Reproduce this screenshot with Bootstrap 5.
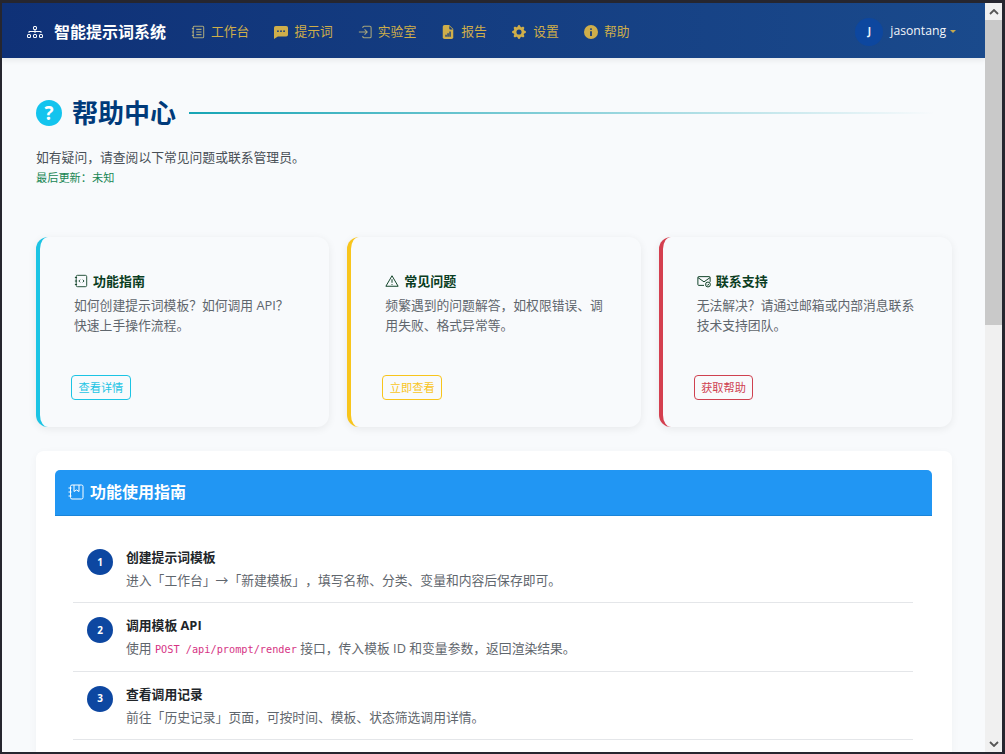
<!DOCTYPE html>
<html lang="zh-CN">
<head>
<meta charset="utf-8">
<title>帮助中心</title>
<link href="https://cdn.jsdelivr.net/npm/bootstrap@5.3.0/dist/css/bootstrap.min.css" rel="stylesheet">
<style>
html,body{height:100%;overflow:hidden}
body{background:#26262f;padding:3px 3px 2px 2px;font-family:"Open Sans","Noto Sans CJK SC",sans-serif;font-size:12.8px;color:#212529;text-spacing-trim:space-all}
.frame{height:100%}
.main-pane{min-width:0;background:#f8fafc;overflow:hidden}
.top-bar{height:55px;background:linear-gradient(90deg,#0f3177,#1a4a8c);padding:2px 29px 0 25px;box-shadow:0 2px 6px rgba(0,0,0,.08)}
.brand-link{color:#fff;font-size:16px;font-weight:700;gap:11px;margin-right:25px;text-decoration:none;line-height:1}
.nav-entry{color:#cfae4a;font-size:12.8px;text-decoration:none;gap:6px;margin-right:25px;line-height:1}
.nav-entry svg{width:14px;height:14px;flex:none}
.nav-entry-wide{gap:7.5px}
.ava{width:28px;height:28px;background:#0d47a1;color:#fff;font-size:10px;font-weight:700}
.user-link{color:#fff;font-size:12.2px;gap:7px;text-decoration:none;opacity:.95}
.user-caret{width:0;height:0;border-left:3.5px solid transparent;border-right:3.5px solid transparent;border-top:3.5px solid #cfae4a;margin-left:-3px}
.page-body{padding:42px 33px 0 34px}
.title-row{gap:10px;height:26px}
.q-icon{width:26px;height:26px;background:#13c4ee;color:#fff;font-weight:700;font-size:19px;line-height:1;flex:none}
.page-title{font-size:26px;font-weight:700;color:#003a7a;margin:0;line-height:27px;white-space:nowrap}
.title-line{height:2px;flex:1;margin:0 17px 0 3px;background:linear-gradient(90deg,#17a5b5,rgba(23,165,181,0))}
.intro{color:#495057;margin:22px 0 0;line-height:18px}
.updated{color:#198754;font-size:11.2px;line-height:16px;margin-top:4px}
.tips-row{--bs-gutter-x:18px;margin-top:51px}
.tip-box{height:190px;background:#f8fafc;border-radius:12px;border-left:4px solid;box-shadow:0 2px 8px rgba(0,0,0,.07);padding:34px 34px 27px 34px}
.tip-cyan{border-color:#1cc4e4}
.tip-gold{border-color:#f8c51c}
.tip-red{border-color:#d43f4f}
.tip-head{font-size:13px;font-weight:700;color:#0a3d22;gap:5px;line-height:20px}
.tip-head svg{width:14px;height:14px;flex:none}
.tip-text{color:#5f666d;line-height:20px;margin:4px 0 0}
.tip-btn{--bs-btn-padding-x:6.5px;--bs-btn-padding-y:0;--bs-btn-font-size:11.2px;--bs-btn-border-radius:4px;--bs-btn-line-height:23px;margin-left:-3px}
.btn-cyan{--bs-btn-color:#1cc4e4;--bs-btn-border-color:#1cc4e4}
.btn-gold{--bs-btn-color:#f8c51c;--bs-btn-border-color:#f8c51c}
.btn-red{--bs-btn-color:#cf4150;--bs-btn-border-color:#cf4150}
.guide-box{background:#fff;border-radius:8px;margin-top:24px;padding:19px 20px 0 19px;box-shadow:0 2px 8px rgba(0,0,0,.04)}
.guide-head{height:46px;background:#2196f3;color:#fff;font-size:16px;font-weight:700;border-radius:5px 5px 0 0;padding:0 14px 2px 13px;gap:6px;border-bottom:1px solid #1a84d8}
.guide-head svg{width:16px;height:16px}
.guide-list{padding:18px 19px 60px 18px}
.guide-item{gap:13px;padding:12px 14px;border-bottom:1px solid #e4e6e9;height:68.5px}
.guide-item:first-child{padding-top:13px;height:69px}
.num{width:26px;height:26px;background:#0d47a1;color:#fff;font-size:10px;font-weight:700;flex:none;margin-top:2px}
.item-title{font-weight:700;color:#212529;line-height:20px}
.item-text{color:#5f666d;line-height:20px;margin-top:3px}
.item-text code{font-family:"DejaVu Sans Mono",monospace;font-size:10.25px;color:#d63384}
.sb{width:17px;background:#f0f0f0;flex:none}
.sb-btn{height:17px;color:#555}
.sb-thumb{height:305px;background:#c9c9c9}
</style>
</head>
<body>
<div class="frame d-flex">
  <div class="main-pane flex-grow-1">
    <nav class="top-bar d-flex align-items-center">
      <a class="brand-link d-flex align-items-center" href="#">
        <svg width="16" height="16" viewBox="0 0 16 16" fill="#fff"><path fill-rule="evenodd" d="M6 3.5A1.5 1.5 0 0 1 7.5 2h1A1.5 1.5 0 0 1 10 3.5v1A1.5 1.5 0 0 1 8.5 6v1H14a.5.5 0 0 1 .5.5v1a.5.5 0 0 1-1 0V8h-5v.5a.5.5 0 0 1-1 0V8h-5v.5a.5.5 0 0 1-1 0v-1A.5.5 0 0 1 2 7h5.5V6A1.5 1.5 0 0 1 6 4.5v-1zM8.5 5a.5.5 0 0 0 .5-.5v-1a.5.5 0 0 0-.5-.5h-1a.5.5 0 0 0-.5.5v1a.5.5 0 0 0 .5.5h1zM0 11.5A1.5 1.5 0 0 1 1.5 10h1A1.5 1.5 0 0 1 4 11.5v1A1.5 1.5 0 0 1 2.5 14h-1A1.5 1.5 0 0 1 0 12.5v-1zm1.5-.5a.5.5 0 0 0-.5.5v1a.5.5 0 0 0 .5.5h1a.5.5 0 0 0 .5-.5v-1a.5.5 0 0 0-.5-.5h-1zm4.5.5A1.5 1.5 0 0 1 7.5 10h1a1.5 1.5 0 0 1 1.5 1.5v1A1.5 1.5 0 0 1 8.5 14h-1A1.5 1.5 0 0 1 6 12.5v-1zm1.5-.5a.5.5 0 0 0-.5.5v1a.5.5 0 0 0 .5.5h1a.5.5 0 0 0 .5-.5v-1a.5.5 0 0 0-.5-.5h-1zm4.5.5a1.5 1.5 0 0 1 1.5-1.5h1a1.5 1.5 0 0 1 1.5 1.5v1a1.5 1.5 0 0 1-1.5 1.5h-1a1.5 1.5 0 0 1-1.5-1.5v-1zm1.5-.5a.5.5 0 0 0-.5.5v1a.5.5 0 0 0 .5.5h1a.5.5 0 0 0 .5-.5v-1a.5.5 0 0 0-.5-.5h-1z"/></svg>
        智能提示词系统
      </a>
      <a class="nav-entry d-flex align-items-center" href="#">
        <svg viewBox="0 0 16 16" fill="none" stroke="#a8a67c" stroke-width="1.2"><rect x="2.500" y="1.500" width="12" height="13" rx="1.200"/><path d="M1 4h2.500M1 8h2.500M1 12h2.500M6 5h6M6 8h6M6 11h6"/></svg>
        工作台
      </a>
      <a class="nav-entry d-flex align-items-center" href="#">
        <svg viewBox="0 0 16 16"><path fill="#cfae4a" d="M2 1h12a2 2 0 0 1 2 2v8a2 2 0 0 1-2 2H4.400L0 16V3a2 2 0 0 1 2-2z"/><circle cx="4.500" cy="7" r="1" fill="#123a7e"/><circle cx="8" cy="7" r="1" fill="#123a7e"/><circle cx="11.500" cy="7" r="1" fill="#123a7e"/></svg>
        提示词
      </a>
      <a class="nav-entry d-flex align-items-center" href="#">
        <svg viewBox="0 0 16 16" fill="none" stroke="#a8a67c" stroke-width="1.200"><path d="M5.500 3.500V3a1.500 1.500 0 0 1 1.500-1.500h6.500A1.500 1.500 0 0 1 15 3v10a1.500 1.500 0 0 1-1.500 1.500H7A1.500 1.500 0 0 1 5.500 13v-.5M1 8h9.500M7.500 5l3 3-3 3"/></svg>
        实验室
      </a>
      <a class="nav-entry d-flex align-items-center" href="#">
        <svg viewBox="0 0 16 16"><path fill="#cfae4a" d="M4 0h5.300L14 4.700V14a2 2 0 0 1-2 2H4a2 2 0 0 1-2-2V2a2 2 0 0 1 2-2z"/><path fill="#123a7e" d="M5 11h1.500v2.500H5zM7.300 9.500h1.500v4H7.300zM9.600 7.500h1.500v6H9.600zM9.500 1v3a1 1 0 0 0 1 1h3z"/></svg>
        报告
      </a>
      <a class="nav-entry nav-entry-wide d-flex align-items-center" href="#">
        <svg viewBox="0 0 16 16"><path fill="#cfae4a" d="M9.405 1.050c-.413-1.400-2.397-1.400-2.810 0l-.1.340a1.464 1.464 0 0 1-2.105.872l-.31-.170c-1.283-.698-2.686.705-1.987 1.987l.169.311c.446.820.023 1.841-.872 2.105l-.340.100c-1.400.413-1.400 2.397 0 2.810l.340.100a1.464 1.464 0 0 1 .872 2.105l-.170.310c-.698 1.283.705 2.686 1.987 1.987l.311-.169a1.464 1.464 0 0 1 2.105.872l.100.340c.413 1.400 2.397 1.400 2.810 0l.100-.340a1.464 1.464 0 0 1 2.105-.872l.310.170c1.283.698 2.686-.705 1.987-1.987l-.169-.311a1.464 1.464 0 0 1 .872-2.105l.340-.100c1.400-.413 1.400-2.397 0-2.810l-.340-.100a1.464 1.464 0 0 1-.872-2.105l.170-.310c.698-1.283-.705-2.686-1.987-1.987l-.311.169a1.464 1.464 0 0 1-2.105-.872l-.100-.340zM8 10.930a2.929 2.929 0 1 1 0-5.860 2.929 2.929 0 0 1 0 5.858z"/></svg>
        设置
      </a>
      <a class="nav-entry d-flex align-items-center" href="#">
        <svg viewBox="0 0 16 16"><circle cx="8" cy="8" r="8" fill="#cfae4a"/><circle cx="8" cy="4.700" r="1.100" fill="#123a7e"/><path fill="#123a7e" d="M7 7h2v5.500H7z"/></svg>
        帮助
      </a>
      <a class="user-link d-flex align-items-center ms-auto" href="#">
        <span class="ava rounded-circle d-flex align-items-center justify-content-center">J</span>
        jasontang
        <span class="user-caret"></span>
      </a>
    </nav>
    <div class="page-body">
      <div class="title-row d-flex align-items-center">
        <span class="q-icon rounded-circle d-flex align-items-center justify-content-center">?</span>
        <h1 class="page-title">帮助中心</h1>
        <span class="title-line"></span>
      </div>
      <p class="intro">如有疑问，请查阅以下常见问题或联系管理员。</p>
      <div class="updated">最后更新：未知</div>
      <div class="row tips-row">
        <div class="col-4">
          <div class="tip-box tip-cyan d-flex flex-column">
            <div class="tip-head d-flex align-items-center">
              <svg viewBox="0 0 16 16" fill="none" stroke="#0a3d22" stroke-width="1"><rect x="2.500" y="1.500" width="12" height="13" rx="1.500"/><path d="M1 4h2.500M1 8h2.500M1 12h2.500M7 6.500L5.500 8 7 9.500M10 6.500l1.500 1.500L10 9.500"/></svg>
              功能指南
            </div>
            <p class="tip-text">如何创建提示词模板？如何调用 API？<br>快速上手操作流程。</p>
            <div class="mt-auto"><a class="btn tip-btn btn-cyan" href="#">查看详情</a></div>
          </div>
        </div>
        <div class="col-4">
          <div class="tip-box tip-gold d-flex flex-column">
            <div class="tip-head d-flex align-items-center">
              <svg viewBox="0 0 16 16" fill="none" stroke="#0a3d22" stroke-width="1.100"><path d="M8 2L15 14H1z" stroke-linejoin="round"/><path d="M8 6v4M8 11.500v1"/></svg>
              常见问题
            </div>
            <p class="tip-text">频繁遇到的问题解答，如权限错误、调<br>用失败、格式异常等。</p>
            <div class="mt-auto"><a class="btn tip-btn btn-gold" href="#">立即查看</a></div>
          </div>
        </div>
        <div class="col-4">
          <div class="tip-box tip-red d-flex flex-column">
            <div class="tip-head d-flex align-items-center">
              <svg viewBox="0 0 16 16" fill="none" stroke="#0a3d22" stroke-width="1.100"><path d="M8 13H2a1 1 0 0 1-1-1V4a1 1 0 0 1 1-1h12a1 1 0 0 1 1 1v5M1 4l7 5 7-5"/><circle cx="12.500" cy="12" r="2.800"/><path d="M11.200 12l1 1 1.500-1.800"/></svg>
              联系支持
            </div>
            <p class="tip-text">无法解决？请通过邮箱或内部消息联系<br>技术支持团队。</p>
            <div class="mt-auto"><a class="btn tip-btn btn-red" href="#">获取帮助</a></div>
          </div>
        </div>
      </div>
      <section class="guide-box">
        <div class="guide-head d-flex align-items-center">
          <svg viewBox="0 0 16 16" fill="none" stroke="#fff" stroke-width="1"><rect x="2.500" y="1" width="12.500" height="14" rx="1.500"/><path d="M.5 4h3M.5 8h3M.5 12h3M6 1v6.500l2.500-1.500 2.500 1.500V1"/></svg>
          功能使用指南
        </div>
        <div class="guide-list">
          <div class="guide-item d-flex">
            <span class="num rounded-circle d-flex align-items-center justify-content-center">1</span>
            <div>
              <div class="item-title">创建提示词模板</div>
              <div class="item-text">进入「工作台」→「新建模板」，填写名称、分类、变量和内容后保存即可。</div>
            </div>
          </div>
          <div class="guide-item d-flex">
            <span class="num rounded-circle d-flex align-items-center justify-content-center">2</span>
            <div>
              <div class="item-title">调用模板 API</div>
              <div class="item-text">使用 <code>POST /api/prompt/render</code> 接口，传入模板 ID 和变量参数，返回渲染结果。</div>
            </div>
          </div>
          <div class="guide-item d-flex">
            <span class="num rounded-circle d-flex align-items-center justify-content-center">3</span>
            <div>
              <div class="item-title">查看调用记录</div>
              <div class="item-text">前往「历史记录」页面，可按时间、模板、状态筛选调用详情。</div>
            </div>
          </div>
        </div>
      </section>
    </div>
  </div>
  <div class="sb d-flex flex-column">
    <div class="sb-btn d-flex align-items-center justify-content-center"><svg width="10" height="6" viewBox="0 0 10 6" fill="none" stroke="currentColor" stroke-width="1.800"><path d="M1 5l4-4 4 4"/></svg></div>
    <div class="sb-thumb"></div>
    <div class="sb-btn d-flex align-items-center justify-content-center mt-auto"><svg width="10" height="6" viewBox="0 0 10 6" fill="none" stroke="currentColor" stroke-width="1.800"><path d="M1 1l4 4 4-4"/></svg></div>
  </div>
</div>
</body>
</html>
